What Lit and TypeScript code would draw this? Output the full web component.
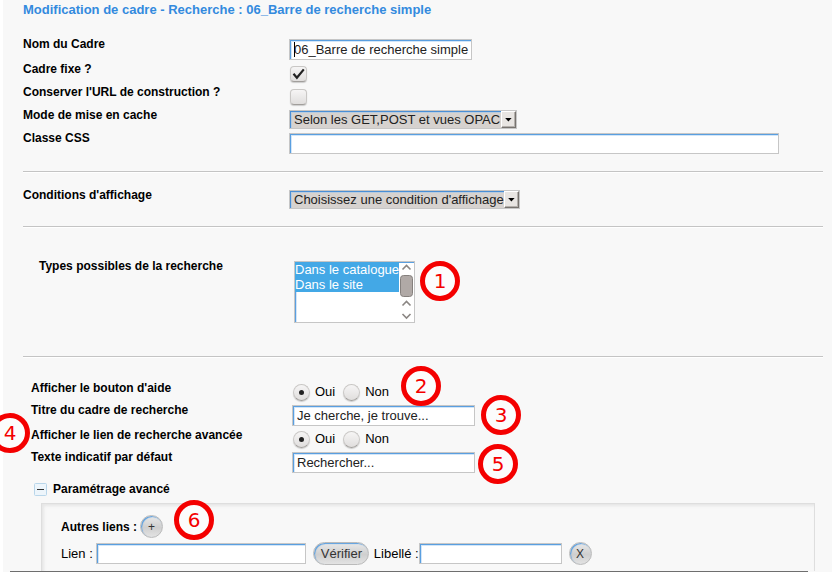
import { LitElement, html, css, svg } from "lit";
import { customElement, property } from "lit/decorators.js";

const controls = css`
  * {
    box-sizing: border-box;
  }
  input,
  select,
  button {
    margin: 0;
    font-family: inherit;
    color: #222;
  }
  .text {
    display: block;
    height: 21px;
    padding: 0 2px 0 4px;
    border: 1px solid #c6c6c6;
    border-radius: 0;
    background: #fff;
    box-shadow: inset 1px 1px #5a9fe0, inset 2px 2px #d3e6f8;
    font-size: 13px;
    outline: none;
    max-width: 100%;
  }
`;

/** Numbered red ring laid over the form. */
@customElement("note-badge")
class NoteBadge extends LitElement {
  @property() n = "";

  static styles = css`
    :host {
      position: absolute;
      display: flex;
      align-items: center;
      justify-content: center;
      box-sizing: border-box;
      width: 40px;
      height: 40px;
      border: 5px solid #f40000;
      border-radius: 50%;
      background: #fcfcfc;
      color: #f40000;
      font: 20px/30px "DejaVu Sans", sans-serif;
      z-index: 2;
    }
  `;

  render() {
    return html`${this.n}`;
  }
}

/** Bevelled drop-down with its own arrow button. */
@customElement("drop-down")
class DropDown extends LitElement {
  @property() label = "";
  @property() value = "";

  static styles = [
    controls,
    css`
      :host {
        display: inline-block;
      }
      .wrap {
        position: relative;
        display: inline-flex;
      }
      .select {
        appearance: none;
        height: 19px;
        padding: 0 15px 0 4px;
        border: 1px solid #c6c6c6;
        border-radius: 0;
        background: #d6d2cf;
        box-shadow: inset 1px 1px #4a8fd6, inset 2px 2px #b9cbdd;
        font-size: 13px;
        line-height: 17px;
        outline: none;
      }
      .arrow {
        position: absolute;
        right: 1px;
        top: 1px;
        width: 15px;
        height: 17px;
        border: 1px solid;
        border-color: #fff #77736f #77736f #fff;
        background: #e8e5e2;
        box-shadow: inset -1px -1px #b4b0ac;
        pointer-events: none;
      }
      .arrow svg {
        display: block;
      }
    `,
  ];

  render() {
    return html`<span class="wrap">
      <select class="select" aria-label=${this.label}>
        <option>${this.value}</option>
      </select>
      <span class="arrow"
        ><svg width="13" height="15" viewBox="0 0 13 15">
          <path d="M3.2 6h6.4L6.4 9.4z" fill="#000" /></svg
      ></span>
    </span>`;
  }
}

const chevron = (y: number, up: boolean) => svg`
  <path d=${up ? `M3.5 ${y + 4.5}l4-4 4 4` : `M3.5 ${y}l4 4 4-4`}
    fill="none" stroke="#8b8683" stroke-width="1.6" />`;

@customElement("app-root")
class AppRoot extends LitElement {
  static styles = [
    controls,
    css`
      :host {
        display: block;
        min-height: 100vh;
        overflow: hidden;
        box-sizing: border-box;
        padding-left: 3px;
        background: #fff;
        color: #000;
        font: 12px/14px "Liberation Sans", Arial, sans-serif;
      }
      .page {
        min-height: 100vh;
        padding: 2px 9px 0 20px;
        display: flex;
        flex-direction: column;
        background: #f8f8f8;
      }
      h1 {
        margin: 0 0 20px;
        font-size: 13px;
        line-height: 15px;
        color: #338ade;
      }
      .row {
        position: relative;
        display: grid;
        grid-template-columns: 266px 1fr;
        align-items: start;
        min-height: 23px;
      }
      .row.tall {
        min-height: 25px;
      }
      .row.short {
        min-height: 22px;
      }
      .name {
        font-weight: bold;
      }
      .field {
        padding-top: 2px;
        min-width: 0;
        position: relative;
      }
      .divider {
        width: 100%;
        height: 2px;
        margin: 0;
        border: 0;
        border-top: 1px solid #c4c4c4;
        background: #fff;
      }
      .general {
        padding-bottom: 17px;
      }
      .conditions {
        padding: 15px 0;
      }
      .types {
        padding: 31px 0 33px 16px;
      }
      .types .row {
        grid-template-columns: 255px 1fr;
      }
      .options {
        padding: 23px 0 0 8px;
      }
      .options .row {
        grid-template-columns: 261px 1fr;
      }
      .w-name {
        width: 183px;
      }
      .w-class {
        width: 490px;
      }
      .caret {
        position: absolute;
        left: 5px;
        top: 5px;
        width: 1px;
        height: 15px;
        background: #000;
      }
      .check,
      .radio {
        appearance: none;
        display: grid;
        place-content: center;
        width: 17px;
        height: 17px;
        border: 1px solid #c9c7c5;
        border-bottom-color: #a19e9b;
        background: linear-gradient(#f6f5f5, #e0dedd);
        box-shadow: 0 1px 1px #ccc;
      }
      .check {
        height: 16px;
        border-radius: 4px;
      }
      .tick {
        position: relative;
        display: block;
        width: 17px;
        margin: 2px 0 0 1px;
      }
      .tick svg {
        position: absolute;
        left: 0;
        top: 0;
        pointer-events: none;
      }
      .radio {
        border-radius: 50%;
      }
      .radio:checked::before {
        content: "";
        width: 5px;
        height: 5px;
        border-radius: 50%;
        background: #222;
      }
      .radios {
        display: flex;
        gap: 8px;
        padding: 1px 0 0 1px;
      }
      .radios label {
        display: flex;
        align-items: center;
        gap: 5px;
        height: 16px;
        font-size: 13px;
      }
      .listbox {
        position: relative;
        width: 121px;
      }
      .list {
        appearance: none;
        display: block;
        width: 100%;
        height: 62px;
        padding: 0 15px 0 0;
        border: 1px solid #c6c6c6;
        border-radius: 0;
        background: #fff;
        box-shadow: inset 1px 1px #5a9fe0, inset 2px 2px #d3e6f8;
        font-size: 13px;
        overflow: hidden;
        scrollbar-width: none;
        outline: none;
      }
      .list option {
        height: 15px;
        min-height: 15px;
        padding: 0;
        line-height: 15px;
      }
      .list option:checked {
        background: #43a8e6 linear-gradient(#43a8e6, #43a8e6);
        color: #fff;
        -webkit-text-fill-color: #fff;
      }
      .scroll {
        position: absolute;
        right: 1px;
        top: 2px;
        pointer-events: none;
      }
      .on-types {
        left: 126px;
        top: 2px;
      }
      .on-help {
        left: 109px;
        top: -15px;
      }
      .on-title {
        left: 189px;
        top: -8px;
      }
      .on-link {
        left: -41px;
        top: -15px;
      }
      .on-text {
        left: 186px;
        top: -6px;
      }
      .on-more {
        left: 113px;
        top: -15px;
      }
      .toggle {
        display: flex;
        align-items: center;
        gap: 6px;
        margin: 9px 0 0 11px;
        padding: 0;
        border: 0;
        background: none;
        font: bold 12px/14px "Liberation Sans", Arial, sans-serif;
        color: #000;
      }
      .advanced {
        flex: 1;
        margin: 7px 8px 0 18px;
        padding: 11px 18px 6px 19px;
        border: solid #dedede;
        border-width: 1px 1px 0;
        box-shadow: inset 2px 2px 3px #e6e6e6;
      }
      .more {
        position: relative;
        display: flex;
        align-items: center;
        gap: 3px;
        margin-bottom: 4px;
        font-weight: bold;
      }
      .links {
        display: flex;
        align-items: center;
        font-size: 13px;
      }
      .links .text.link {
        width: 210px;
        margin: 0 7px 0 3px;
      }
      .links .text.caption {
        width: 143px;
        margin: 0 7px 0 0;
      }
      .pill {
        height: 23px;
        padding: 0 7px;
        border: 1px solid #bbb;
        border-radius: 12px;
        background: linear-gradient(#e9e9e9, #cfcfcf 55%, #e3e3e3);
        box-shadow: inset 1px 1px 1px #5a9fe0;
        font-size: 13px;
        line-height: 20px;
        color: #333;
      }
      .pill.verify {
        width: 56px;
        margin-right: 5px;
      }
      .pill.round {
        width: 23px;
        padding: 0;
        font-size: 12px;
      }
      .foot {
        height: 1px;
        margin: 0 15px 0 -13px;
        background: #6e6e6e;
      }
    `,
  ];

  private radios(name: string) {
    return html`<div class="radios" role="radiogroup" aria-label=${name}>
      <label><input class="radio" type="radio" name=${name} checked />Oui</label>
      <label><input class="radio" type="radio" name=${name} />Non</label>
    </div>`;
  }

  render() {
    return html`<main class="page">
      <h1>Modification de cadre - Recherche : 06_Barre de recherche simple</h1>

      <section class="general">
        <div class="row tall">
          <label class="name" for="frame">Nom du Cadre</label>
          <div class="field">
            <input id="frame" class="text w-name" value="06_Barre de recherche simple" />
            <span class="caret"></span>
          </div>
        </div>
        <div class="row">
          <label class="name" for="fixed">Cadre fixe ?</label>
          <div class="field">
            <span class="tick">
              <input id="fixed" class="check" type="checkbox" checked />
              <svg width="17" height="16" viewBox="0 0 17 16">
                <path d="M3.5 7.8l3.4 4L13.8 3.4" fill="none" stroke="#222" stroke-width="2.2" />
              </svg>
            </span>
          </div>
        </div>
        <div class="row">
          <label class="name" for="keep">Conserver l'URL de construction ?</label>
          <div class="field">
            <span class="tick"><input id="keep" class="check" type="checkbox" /></span>
          </div>
        </div>
        <div class="row">
          <span class="name">Mode de mise en cache</span>
          <div class="field">
            <drop-down label="Mode de mise en cache" value="Selon les GET,POST et vues OPAC"></drop-down>
          </div>
        </div>
        <div class="row">
          <label class="name" for="css">Classe CSS</label>
          <div class="field"><input id="css" class="text w-class" /></div>
        </div>
      </section>
      <hr class="divider" />

      <section class="conditions">
        <div class="row">
          <span class="name">Conditions d'affichage</span>
          <div class="field">
            <drop-down label="Conditions d'affichage" value="Choisissez une condition d'affichage"></drop-down>
          </div>
        </div>
      </section>
      <hr class="divider" />

      <section class="types">
        <div class="row">
          <label class="name" for="kinds">Types possibles de la recherche</label>
          <div class="field">
            <div class="listbox">
              <select id="kinds" class="list" multiple size="4">
                <option selected>Dans le catalogue</option>
                <option selected>Dans le site</option>
              </select>
              <svg class="scroll" width="15" height="59" viewBox="0 0 15 59">
                <rect width="15" height="59" fill="#fff" />
                ${chevron(2, true)}
                <rect x="1.5" y="12.5" width="12" height="21" rx="3" fill="#b0a9a6" stroke="#85807d" />
                ${chevron(38, true)} ${chevron(51, false)}
              </svg>
            </div>
            <note-badge class="on-types" n="1"></note-badge>
          </div>
        </div>
      </section>
      <hr class="divider" />

      <section class="options">
        <div class="row short">
          <span class="name">Afficher le bouton d'aide</span>
          <div class="field">
            ${this.radios("Afficher le bouton d'aide")}
            <note-badge class="on-help" n="2"></note-badge>
          </div>
        </div>
        <div class="row tall">
          <label class="name" for="title">Titre du cadre de recherche</label>
          <div class="field">
            <input id="title" class="text w-name" value="Je cherche, je trouve..." />
            <note-badge class="on-title" n="3"></note-badge>
          </div>
        </div>
        <div class="row short">
          <span class="name">Afficher le lien de recherche avancée</span>
          <div class="field">${this.radios("Afficher le lien de recherche avancée")}</div>
          <note-badge class="on-link" n="4"></note-badge>
        </div>
        <div class="row">
          <label class="name" for="hint">Texte indicatif par défaut</label>
          <div class="field">
            <input id="hint" class="text w-name" value="Rechercher..." />
            <note-badge class="on-text" n="5"></note-badge>
          </div>
        </div>
      </section>

      <button class="toggle" type="button" aria-expanded="true">
        <svg width="13" height="13" viewBox="0 0 13 13">
          <rect x=".5" y=".5" width="12" height="12" rx="1" fill="#edf5fb" stroke="#b9d6ea" />
          <path d="M3 6.5h7" stroke="#333" />
        </svg>
        Paramétrage avancé
      </button>

      <section class="advanced">
        <div class="more">
          Autres liens :
          <button class="pill round" type="button" aria-label="Ajouter">+</button>
          <note-badge class="on-more" n="6"></note-badge>
        </div>
        <div class="links">
          <label for="link">Lien :</label>
          <input id="link" class="text link" />
          <button class="pill verify" type="button">Vérifier</button>
          <label for="caption">Libellé :</label>
          <input id="caption" class="text caption" />
          <button class="pill round" type="button">X</button>
        </div>
      </section>
      <div class="foot"></div>
    </main>`;
  }
}
